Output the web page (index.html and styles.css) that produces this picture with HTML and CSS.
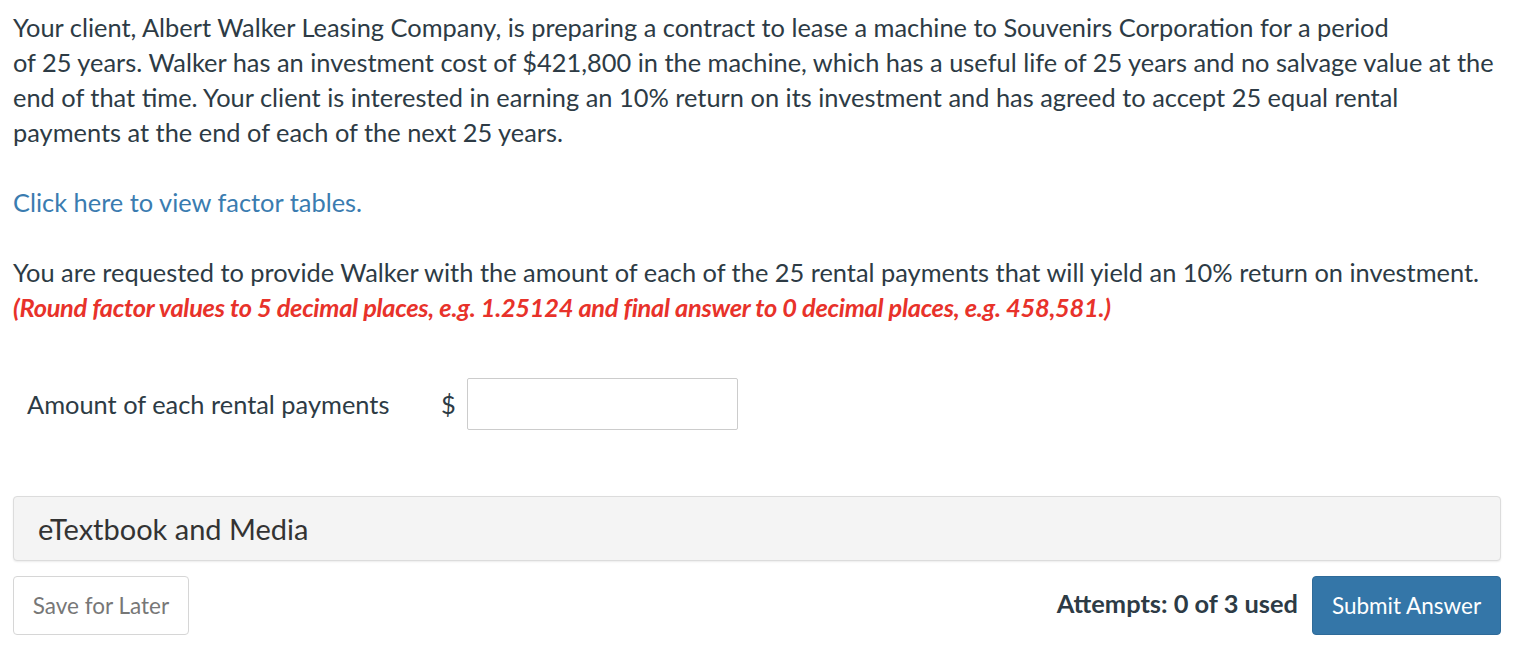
FILE: index.html
```html
<!DOCTYPE html>
<html>
<head>
<meta charset="utf-8">
<link rel="stylesheet" href="styles.css">
</head>
<body>
<div class="page">
  <div class="question">
    <p class="para">Your client, Albert Walker Leasing Company, is preparing a contract to lease a machine to Souvenirs Corporation for a period<br>of 25 years. Walker has an investment cost of $421,800 in the machine, which has a useful life of 25 years and no salvage value at the end of that time. Your client is interested in earning an 10% return on its investment and has agreed to accept 25 equal rental payments at the end of each of the next 25 years.</p>
    <p class="para"><a class="link" href="#">Click here to view factor tables.</a></p>
    <p class="para">You are requested to provide Walker with the amount of each of the 25 rental payments that will yield an 10% return on investment.<br><span class="note">(Round factor values to 5 decimal places, e.g. 1.25124 and final answer to 0 decimal places, e.g. 458,581.)</span></p>
  </div>
  <div class="answer-row">
    <span class="answer-label">Amount of each rental payments</span>
    <span class="currency">$</span>
    <input class="answer-input" type="text">
  </div>
  <div class="media-panel">eTextbook and Media</div>
  <div class="actions">
    <button class="btn-save">Save for Later</button>
    <div class="right-actions">
      <span class="attempts">Attempts: 0 of 3 used</span>
      <button class="btn-submit">Submit Answer</button>
    </div>
  </div>
</div>
</body>
</html>
```
FILE: styles.css
```css
html, body {
  margin: 0;
  padding: 0;
  background: #ffffff;
}
body {
  font-family: Lato, "Open Sans", sans-serif;
  color: #2d3b45;
}
.page {
  width: 1488px;
  padding: 10px 0 0 13px;
}
.question {
  width: 1482px;
}
.para {
  margin: 0 0 35px 0;
  font-size: 25.4px;
  line-height: 35px;
}
.link {
  color: #3a7cb0;
  text-decoration: none;
}
.note {
  color: #e8322a;
  font-weight: bold;
  font-style: italic;
  letter-spacing: -0.28px;
}
.answer-row {
  display: flex;
  align-items: center;
  margin-top: 53px;
  padding-left: 14px;
  height: 52px;
}
.answer-label {
  font-size: 25.4px;
  width: 414px;
}
.currency {
  font-size: 25.4px;
  width: 26px;
}
.answer-input {
  box-sizing: border-box;
  width: 271px;
  height: 52px;
  border: 1px solid #cccccc;
  border-radius: 2px;
  margin: 0;
  padding: 0 8px;
  font-size: 22px;
  font-family: Lato, sans-serif;
}
.media-panel {
  box-sizing: border-box;
  margin-top: 66px;
  width: 1488px;
  height: 65px;
  background: #f4f4f4;
  border: 1px solid #dcdcdc;
  border-radius: 4px;
  box-shadow: 0 1px 2px rgba(0,0,0,0.08);
  padding-left: 24px;
  display: flex;
  align-items: center;
  font-size: 29px;
  color: #333333;
}
.actions {
  display: flex;
  justify-content: space-between;
  align-items: center;
  margin-top: 15px;
  width: 1488px;
}
.btn-save {
  box-sizing: border-box;
  width: 176px;
  height: 59px;
  background: #ffffff;
  border: 1px solid #d6d6d6;
  border-radius: 4px;
  font-family: Lato, sans-serif;
  font-size: 22.5px;
  color: #777777;
  padding: 0;
}
.right-actions {
  display: flex;
  align-items: center;
  gap: 14px;
}
.attempts {
  font-size: 25.4px;
  font-weight: bold;
  color: #2d3b45;
  margin-bottom: 6px;
}
.btn-submit {
  box-sizing: border-box;
  width: 189px;
  height: 59px;
  background: #3476a8;
  border: 1px solid #2f6b99;
  border-radius: 4px;
  font-family: Lato, sans-serif;
  font-size: 22.5px;
  color: #ffffff;
  padding: 0;
}
```
